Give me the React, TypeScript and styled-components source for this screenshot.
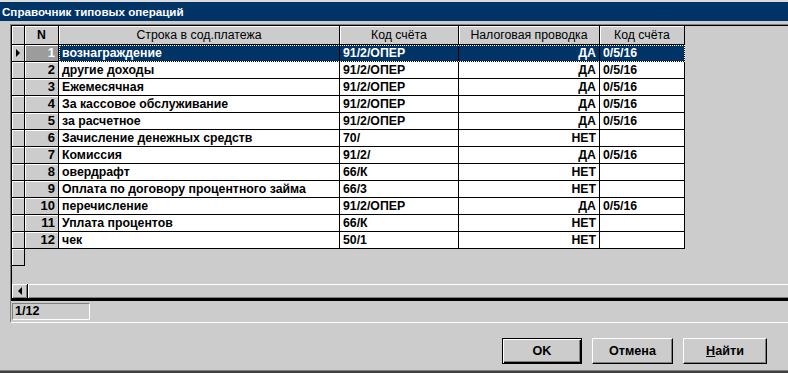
import React from "react";
import styled, { createGlobalStyle } from "styled-components";

const GRAY = "#cccccc";
const NAVY = "#003366";
const COLS = "13px 34px 281px 119px 141px 85px";

const Global = createGlobalStyle`
  html, body { margin: 0; padding: 0; background: ${GRAY}; }
  body { font-family: "Liberation Sans", Arial, sans-serif; font-size: 12px; color: #000; }
  * { box-sizing: border-box; }
`;

const Window = styled.div`
  width: 788px;
  height: 373px;
  background: ${GRAY};
  border-top: 2px solid #dcdcdc;
  display: flex;
  flex-direction: column;
  overflow: hidden;
  box-shadow: inset 0 -2px #404040, inset 0 -3px #808080;
`;

const TitleBar = styled.div`
  height: 19px;
  background: ${NAVY};
  color: #fff;
  font-weight: bold;
  font-size: 11.6px;
  line-height: 19px;
  padding-left: 2px;
  white-space: nowrap;
`;

const Panel = styled.div`
  margin: 3px 0 0 10px;
  border-top: 1px solid #808080;
  border-left: 1px solid #808080;
  border-bottom: 1px solid #ffffff;
  display: flex;
  flex-direction: column;
`;

const Grid = styled.div`
  border-top: 1px solid #000;
  border-left: 1px solid #000;
  border-bottom: 2px solid #000;
  height: 276px;
  display: flex;
  flex-direction: column;
`;

const Row = styled.div<{ $h: number }>`
  display: grid;
  grid-template-columns: ${COLS};
  height: ${(p) => p.$h}px;
  flex: none;
`;

const DataGroup = styled.div<{ $sel?: boolean }>`
  grid-column: 3 / span 4;
  display: grid;
  grid-template-columns: 281px 119px 141px 85px;
  outline: ${(p) => (p.$sel ? "1px dotted #ffffff" : "none")};
  outline-offset: -1px;
`;

const HeadCell = styled.div`
  background: ${GRAY};
  border-right: 1px solid #000;
  border-bottom: 1px solid #000;
  box-shadow: inset 1px 1px #ffffff;
  text-align: center;
  line-height: 18px;
  font-size: 12.3px;
  white-space: nowrap;
  overflow: hidden;
`;

const HeadBold = styled(HeadCell)`
  font-weight: bold;
`;

const Indicator = styled.div`
  background: ${GRAY};
  border-right: 1px solid #000;
  border-bottom: 1px solid #000;
  box-shadow: inset 1px 1px #ffffff;
  display: flex;
  align-items: center;
  justify-content: center;
  width: 13px;
  height: 17px;
`;

const Arrow = styled.span`
  width: 0;
  height: 0;
  border-top: 4px solid transparent;
  border-bottom: 4px solid transparent;
  border-left: 4px solid #000;
  margin-left: -1px;
`;

const NumCell = styled.div<{ $sel?: boolean }>`
  background: ${(p) => (p.$sel ? "#9c9c9c" : GRAY)};
  color: ${(p) => (p.$sel ? "#ffffff" : "#000")};
  border-right: 1px solid #000;
  border-bottom: 1px solid #000;
  box-shadow: inset 1px 1px #ffffff;
  text-align: right;
  padding-right: 3px;
  font-weight: bold;
  font-size: 13px;
  line-height: 16px;
`;

const Cell = styled.div<{ $sel?: boolean; $right?: boolean }>`
  background: ${(p) => (p.$sel ? NAVY : "#ffffff")};
  color: ${(p) => (p.$sel ? "#ffffff" : "#000")};
  border-right: 1px solid #000;
  border-bottom: 1px solid #000;
  text-align: ${(p) => (p.$right ? "right" : "left")};
  padding: 0 3px;
  font-weight: bold;
  font-size: 12.3px;
  line-height: 16px;
  white-space: nowrap;
  overflow: hidden;
`;

const Filler = styled.div`
  flex: 1;
`;

const ScrollBar = styled.div`
  height: 15px;
  display: flex;
  flex: none;
`;

const ScrollBtn = styled.div`
  width: 16px;
  background: ${GRAY};
  border-right: 1px solid #000;
  border-bottom: 1px solid #000;
  box-shadow: inset 1px 1px #ffffff, inset -1px -1px #808080;
  display: flex;
  align-items: center;
  justify-content: center;
`;

const LeftArrow = styled.span`
  width: 0;
  height: 0;
  border-top: 4px solid transparent;
  border-bottom: 4px solid transparent;
  border-right: 4px solid #000;
`;

const Thumb = styled.div`
  flex: 1;
  background: ${GRAY};
  border-bottom: 1px solid #000;
  box-shadow: inset 1px 1px #ffffff, inset 0 -1px #808080;
`;

const StatusArea = styled.div`
  height: 21px;
  padding: 2px 0 0 1px;
  display: flex;
`;

const StatusBox = styled.div`
  width: 78px;
  height: 17px;
  border-top: 1px solid #808080;
  border-left: 1px solid #808080;
  border-bottom: 1px solid #ffffff;
  border-right: 1px solid #ffffff;
  font-weight: bold;
  font-size: 12.6px;
  line-height: 15px;
  padding-left: 2px;
`;

const Buttons = styled.div`
  display: flex;
  justify-content: flex-end;
  gap: 10px;
  margin-top: 15px;
  padding-right: 21px;
`;

const Button = styled.button<{ $w: number; $default?: boolean }>`
  width: ${(p) => p.$w}px;
  height: 26px;
  background: ${GRAY};
  font-family: "Liberation Sans", Arial, sans-serif;
  font-weight: bold;
  font-size: 12.6px;
  color: #000;
  padding: 0;
  border: 1px solid;
  border-color: ${(p) => (p.$default ? "#000 #000 #000 #000" : "#fff #000 #000 #fff")};
  box-shadow: ${(p) =>
    p.$default
      ? "inset 1px 1px #fff, inset -1px -1px #000, inset -2px -2px #808080"
      : "inset -1px -1px #808080"};
`;

const U = styled.span`
  text-decoration: underline;
`;

type Rec = [string, string, string, string];

const data: Rec[] = [
  ["вознаграждение", "91/2/ОПЕР", "ДА", "0/5/16"],
  ["другие доходы", "91/2/ОПЕР", "ДА", "0/5/16"],
  ["Ежемесячная", "91/2/ОПЕР", "ДА", "0/5/16"],
  ["За кассовое обслуживание", "91/2/ОПЕР", "ДА", "0/5/16"],
  ["за расчетное", "91/2/ОПЕР", "ДА", "0/5/16"],
  ["Зачисление денежных средств", "70/", "НЕТ", ""],
  ["Комиссия", "91/2/", "ДА", "0/5/16"],
  ["овердрафт", "66/К", "НЕТ", ""],
  ["Оплата по договору процентного займа", "66/3", "НЕТ", ""],
  ["перечисление", "91/2/ОПЕР", "ДА", "0/5/16"],
  ["Уплата процентов", "66/К", "НЕТ", ""],
  ["чек", "50/1", "НЕТ", ""],
];

export default function App() {
  return (
    <>
      <Global />
      <Window>
        <TitleBar>Справочник типовых операций</TitleBar>
        <Panel>
          <Grid>
            <Row $h={19}>
              <HeadCell />
              <HeadBold>N</HeadBold>
              <HeadCell>Строка в сод.платежа</HeadCell>
              <HeadCell>Код счёта</HeadCell>
              <HeadCell>Налоговая проводка</HeadCell>
              <HeadCell>Код счёта</HeadCell>
            </Row>
            {data.map((r, i) => {
              const sel = i === 0;
              return (
                <Row $h={17} key={i}>
                  <Indicator>{sel && <Arrow />}</Indicator>
                  <NumCell $sel={sel}>{i + 1}</NumCell>
                  <DataGroup $sel={sel}>
                    <Cell $sel={sel}>{r[0]}</Cell>
                    <Cell $sel={sel}>{r[1]}</Cell>
                    <Cell $sel={sel} $right>
                      {r[2]}
                    </Cell>
                    <Cell $sel={sel}>{r[3]}</Cell>
                  </DataGroup>
                </Row>
              );
            })}
            <Row $h={17}>
              <Indicator />
            </Row>
            <Filler />
            <ScrollBar>
              <ScrollBtn>
                <LeftArrow />
              </ScrollBtn>
              <Thumb />
            </ScrollBar>
          </Grid>
          <StatusArea>
            <StatusBox>1/12</StatusBox>
          </StatusArea>
        </Panel>
        <Buttons>
          <Button $w={80} $default>
            OK
          </Button>
          <Button $w={81}>Отмена</Button>
          <Button $w={84}>
            <U>Н</U>айти
          </Button>
        </Buttons>
      </Window>
    </>
  );
}
